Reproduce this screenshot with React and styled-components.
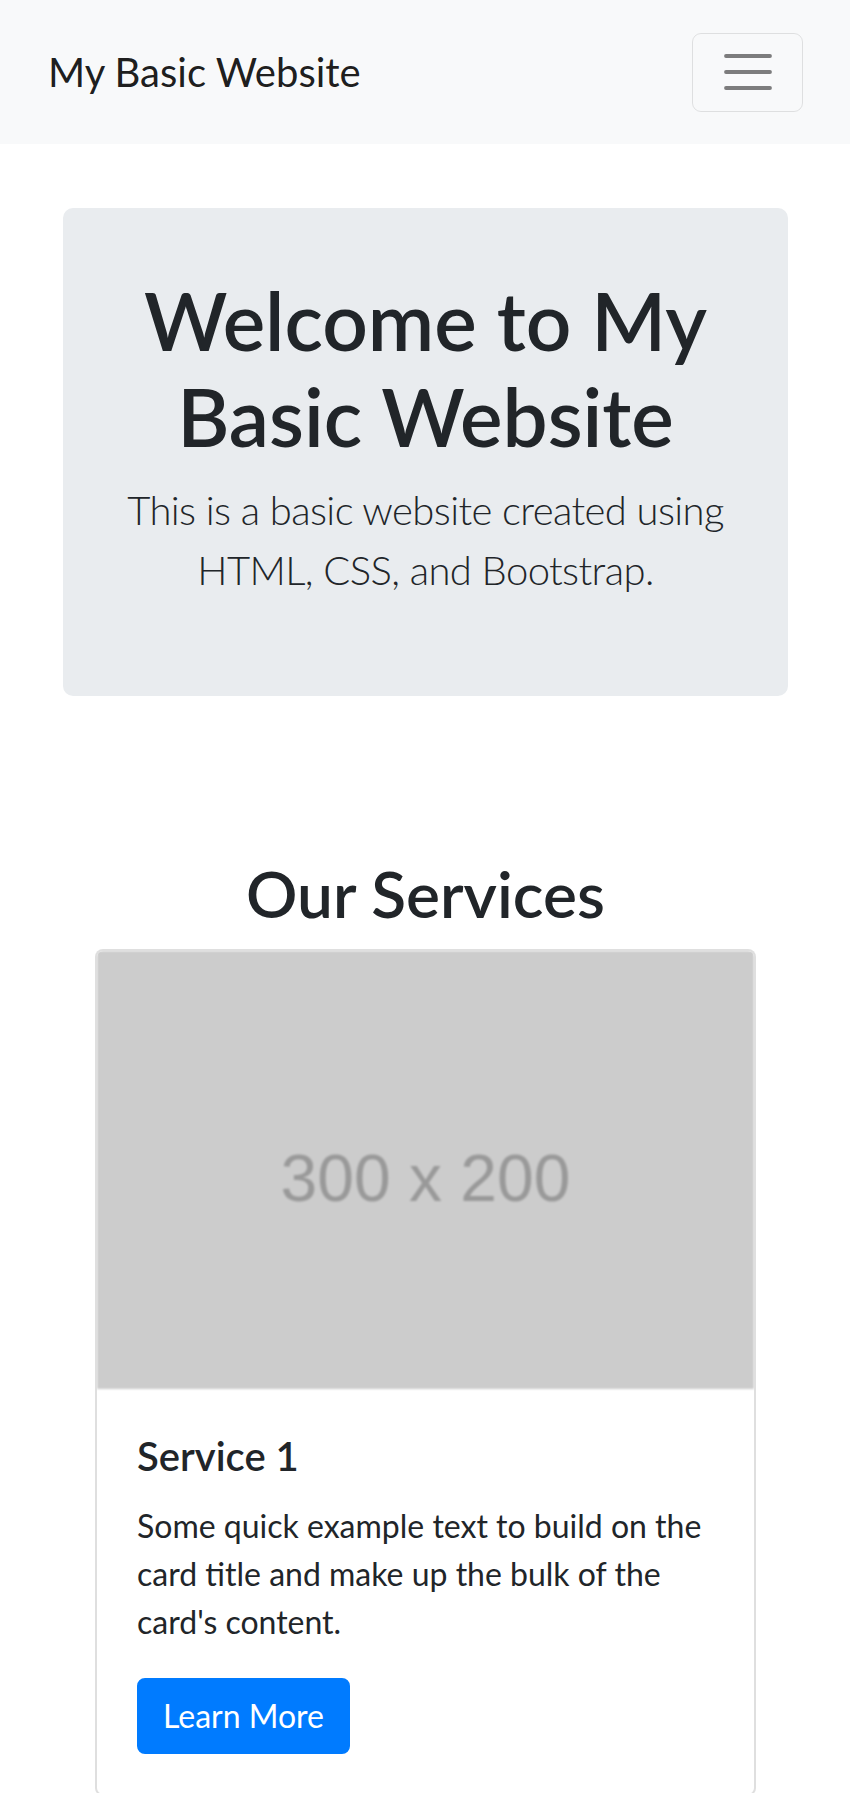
import React from "react";
import styled, { createGlobalStyle } from "styled-components";

const GlobalStyle = createGlobalStyle`
  *, *::before, *::after { box-sizing: border-box; }
  body {
    margin: 0;
    font-family: "Lato", "Open Sans", sans-serif;
    font-size: 32px;
    line-height: 1.5;
    color: #212529;
    background: #fff;
  }
`;

const Navbar = styled.nav`
  display: flex;
  align-items: center;
  justify-content: space-between;
  height: 144px;
  padding: 32px 47px 32px 48px;
  background: #f8f9fa;
`;

const Brand = styled.a`
  font-size: 40px;
  line-height: 60px;
  padding: 10px 0;
  color: rgba(0, 0, 0, 0.9);
  text-decoration: none;
`;

const Toggler = styled.button`
  display: flex;
  align-items: center;
  justify-content: center;
  width: 111px;
  height: 79px;
  padding: 0;
  background: transparent;
  border: 1.5px solid rgba(0, 0, 0, 0.1);
  border-radius: 9px;
`;

const Main = styled.main`
  padding: 64px 62px 0 63px;
`;

const Jumbotron = styled.section`
  background: #e9ecef;
  border-radius: 10px;
  padding: 64px 32px;
  text-align: center;
  margin-bottom: 64px;
`;

const Title = styled.h1`
  margin: 0 0 16px;
  font-size: 80px;
  font-weight: 600;
  line-height: 1.2;
`;

const Lead = styled.p`
  margin: 0 0 32px;
  font-size: 40px;
  font-weight: 300;
  line-height: 1.5;
  letter-spacing: -0.6px;
`;

const Services = styled.section`
  padding-top: 96px;
`;

const SectionTitle = styled.h2`
  margin: 0 0 16px;
  font-size: 64px;
  font-weight: 600;
  line-height: 1.2;
  text-align: center;
`;

const Card = styled.article`
  margin: 0 32px;
  border: 2px solid rgba(0, 0, 0, 0.125);
  border-radius: 8px;
  overflow: hidden;
  background: #fff;
`;

const Placeholder = styled.div`
  aspect-ratio: 3 / 2;
  background: #ccc;
  display: flex;
  align-items: center;
  justify-content: center;
  padding-top: 16px;
  font-family: "Liberation Sans", Arial, sans-serif;
  font-size: 66px;
  line-height: 1;
  color: #999;
  filter: blur(0.8px);
`;

const CardBody = styled.div`
  padding: 43px 40px 40px;
`;

const CardTitle = styled.h5`
  margin: 0 0 22px;
  font-size: 40px;
  font-weight: 600;
  line-height: 1.2;
`;

const CardText = styled.p`
  margin: 0 0 32px;
  font-size: 32px;
  line-height: 48px;
`;

const Button = styled.a`
  display: inline-block;
  padding: 12px 24px;
  font-size: 32px;
  line-height: 48px;
  color: #fff;
  background: #007bff;
  border: 2px solid #007bff;
  border-radius: 8px;
  text-decoration: none;
`;

function TogglerIcon() {
  return (
    <svg width="60" height="60" viewBox="0 0 30 30" aria-hidden="true">
      <path
        d="M4 7h22M4 15h22M4 23h22"
        stroke="rgba(0,0,0,0.5)"
        strokeWidth="1.9"
        strokeLinecap="round"
        fill="none"
      />
    </svg>
  );
}

export default function App() {
  return (
    <>
      <GlobalStyle />
      <Navbar>
        <Brand href="#">My Basic Website</Brand>
        <Toggler aria-label="Toggle navigation">
          <TogglerIcon />
        </Toggler>
      </Navbar>
      <Main>
        <Jumbotron>
          <Title>Welcome to My Basic Website</Title>
          <Lead>This is a basic website created using HTML, CSS, and Bootstrap.</Lead>
        </Jumbotron>
        <Services>
          <SectionTitle>Our Services</SectionTitle>
          <Card>
            <Placeholder>300 x 200</Placeholder>
            <CardBody>
              <CardTitle>Service 1</CardTitle>
              <CardText>
                Some quick example text to build on the card title and make up the bulk of the card's content.
              </CardText>
              <Button href="#">Learn More</Button>
            </CardBody>
          </Card>
        </Services>
      </Main>
    </>
  );
}
